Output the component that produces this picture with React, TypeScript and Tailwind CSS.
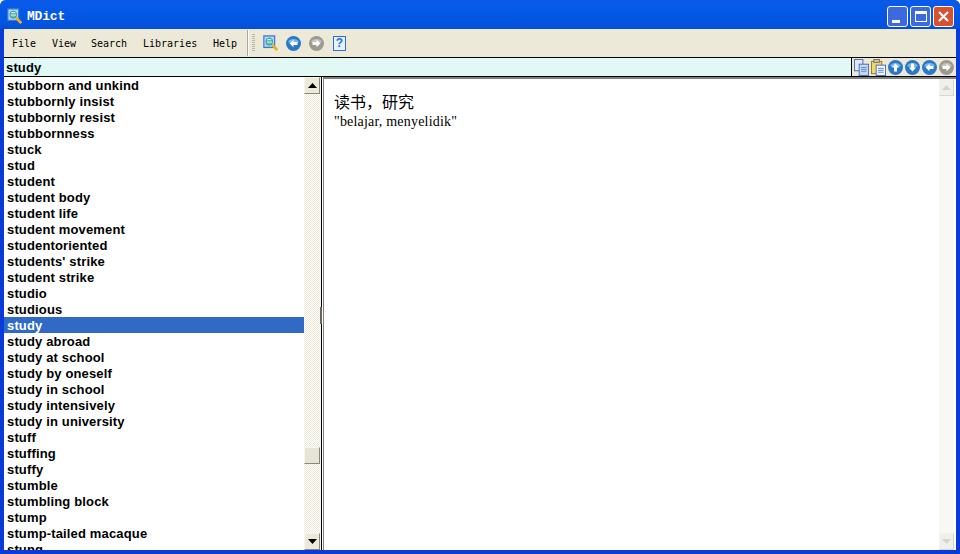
const words = [
  "stubborn and unkind",
  "stubbornly insist",
  "stubbornly resist",
  "stubbornness",
  "stuck",
  "stud",
  "student",
  "student body",
  "student life",
  "student movement",
  "studentoriented",
  "students' strike",
  "student strike",
  "studio",
  "studious",
  "study",
  "study abroad",
  "study at school",
  "study by oneself",
  "study in school",
  "study intensively",
  "study in university",
  "stuff",
  "stuffing",
  "stuffy",
  "stumble",
  "stumbling block",
  "stump",
  "stump-tailed macaque",
  "stung",
]

function RoundArrow({ dir, gray }: { dir: "left" | "right" | "up" | "down"; gray?: boolean }) {
  const rot = { left: 0, right: 180, up: 90, down: 270 }[dir]
  return (
    <svg width="15" height="15" viewBox="0 0 15 15" className="shrink-0">
      <circle cx="7.5" cy="7.5" r="7.5" fill={gray ? "#9a9a90" : "#2a78c8"} />
      <path d="M2 6 A6 5 0 0 1 13 6 A8 5 0 0 1 2 6" fill={gray ? "#c4c4bc" : "#7db8ea"} />
      <g transform={`rotate(${rot} 7.5 7.5)`}>
        <path d="M3.5 7.5 L7.5 3.8 V6 H11.5 V9 H7.5 V11.2 Z" fill="#fff" />
      </g>
    </svg>
  )
}

function AppIcon() {
  return (
    <svg width="15" height="16" viewBox="0 0 18 18" preserveAspectRatio="none" className="shrink-0">
      <rect x="1" y="1" width="13" height="13" fill="#a8d8f4" stroke="#3f78c8" strokeWidth="1.4" />
      <circle cx="7.5" cy="7.5" r="4" fill="#62c49a" stroke="#2f86c4" />
      <path d="M5 5 H10 M4.5 8 H11" stroke="#e6f6ff" />
      <path d="M11 11 L17 17" stroke="#e8b020" strokeWidth="3" />
    </svg>
  )
}

function PageIcon({ paste }: { paste?: boolean }) {
  if (paste) {
    return (
      <svg width="15" height="17" viewBox="0 0 16 18" preserveAspectRatio="none" className="shrink-0">
        <rect x="0.5" y="2.5" width="11" height="13" fill="#f4d56c" stroke="#8f7a30" />
        <rect x="3" y="0.5" width="6" height="3" fill="#c8c8c0" stroke="#70705c" />
        <rect x="5.5" y="6.5" width="10" height="11" fill="#eef4fc" stroke="#4a6cb0" />
        <path d="M7.5 10 H13.5 M7.5 12 H13.5 M7.5 14 H13.5" stroke="#5f86c8" />
      </svg>
    )
  }
  return (
    <svg width="15" height="17" viewBox="0 0 16 18" preserveAspectRatio="none" className="shrink-0">
      <rect x="0.5" y="0.5" width="9" height="12" fill="#dce8f8" stroke="#4a6cb0" />
      <rect x="5.5" y="5.5" width="10" height="12" fill="#c4d8f2" stroke="#4a6cb0" />
      <path d="M7.5 9 H13.5 M7.5 11 H13.5 M7.5 13 H13.5" stroke="#5f86c8" />
    </svg>
  )
}

function ScrollBtn({ up, disabled }: { up?: boolean; disabled?: boolean }) {
  return (
    <div
      className={`flex h-[17px] w-full shrink-0 items-center justify-center border ${
        disabled
          ? "border-t-[#f4f4ee] border-l-[#f4f4ee] border-r-[#d8d8d0] border-b-[#d8d8d0] bg-[#f0f0ea]"
          : "border-t-[#f6f5ee] border-l-[#f6f5ee] border-r-[#8a8878] border-b-[#8a8878] bg-[#ece9d8]"
      }`}
    >
      <svg width="9" height="5" viewBox="0 0 9 5">
        <path d={up ? "M4.5 0 L9 5 H0 Z" : "M0 0 H9 L4.5 5 Z"} fill={disabled ? "#d4d4cc" : "#000"} />
      </svg>
    </div>
  )
}

export default function App() {
  return (
    <div className="flex h-[554px] w-[960px] flex-col overflow-hidden rounded-t-md bg-[#0a3ad8] px-[4px] pb-[4px]">
      {/* Title bar */}
      <div className="-mx-[4px] flex h-[29px] shrink-0 items-center bg-gradient-to-b from-[#0a5ae8] via-[#0458e6] to-[#0350d8] pl-[7px] pr-[6px] pt-[3px]">
        <AppIcon />
        <span className="ml-[5px] pt-[2px] font-['Liberation_Mono',monospace] text-[13px] font-bold tracking-[-0.2px] text-white">MDict</span>
        <div className="ml-auto flex gap-[2px]">
          <div className="flex h-[21px] w-[21px] items-end rounded-[3px] border border-white bg-[#3c68e0] pb-[3px] pl-[4px]">
            <div className="h-[3px] w-[8px] bg-white" />
          </div>
          <div className="flex h-[21px] w-[21px] items-center justify-center rounded-[3px] border border-white bg-[#3c68e0]">
            <div className="h-[11px] w-[12px] border border-t-[3px] border-white" />
          </div>
          <div className="flex h-[21px] w-[21px] items-center justify-center rounded-[3px] border border-white bg-[#d8502c]">
            <svg width="13" height="13" viewBox="0 0 13 13">
              <path d="M2 2 L11 11 M11 2 L2 11" stroke="#fff" strokeWidth="2.2" />
            </svg>
          </div>
        </div>
      </div>

      {/* Menu and toolbar */}
      <div className="flex h-[28px] shrink-0 items-center bg-[#ece9d8] font-['DejaVu_Sans_Mono',monospace] text-[10px] text-black">
        <div className="flex pl-[4px]">
          <span className="w-[40px] pl-[4px]">File</span>
          <span className="w-[39px] pl-[4px]">View</span>
          <span className="w-[52px] pl-[4px]">Search</span>
          <span className="w-[70px] pl-[4px]">Libraries</span>
          <span className="w-[36px] pl-[4px]">Help</span>
        </div>
        <div className="ml-[2px] h-[26px] w-[2px] border-l border-[#aca899] bg-white" />
        <div className="ml-[3px] h-[18px] w-[3px] bg-[repeating-linear-gradient(#b8b5a4_0_1px,#ece9d8_1px_2px)]" />
        <div className="ml-[8px] flex items-center gap-[8px]">
          <AppIcon />
          <RoundArrow dir="left" />
          <RoundArrow dir="right" gray />
          <div className="ml-[1px] flex h-[15px] w-[13px] items-center justify-center border border-[#2a6ee0] bg-[#e8f2ff] font-['Liberation_Sans',sans-serif] text-[12px] font-bold text-[#2a6ee0]">?</div>
        </div>
      </div>

      {/* Search box */}
      <div className="flex h-[20px] shrink-0 items-stretch border-y border-black bg-[#e2f8f4]">
        <div className="flex flex-1 items-center pl-[2px] pt-[2px] font-['Liberation_Sans',sans-serif] text-[13px] leading-[16px] font-bold tracking-[0.15px] text-black">study</div>
        <div className="flex w-[105px] items-center gap-[2px] border-l border-black bg-[#ece9d8] pl-[2px]">
          <PageIcon />
          <PageIcon paste />
          <RoundArrow dir="up" />
          <RoundArrow dir="down" />
          <RoundArrow dir="left" />
          <RoundArrow dir="right" gray />
        </div>
      </div>

      <div className="flex min-h-0 flex-1">
        {/* Word list */}
        <div className="w-[300px] shrink-0 overflow-hidden bg-white font-['Liberation_Sans',sans-serif] text-[13px] font-bold tracking-[0.15px] text-black">
          {words.map((w) => (
            <div
              key={w}
              className={`h-[16px] pl-[3px] leading-[18px] ${w === "study" ? "bg-[#316ac5] text-white" : ""}`}
            >
              {w}
            </div>
          ))}
        </div>

        {/* List scrollbar */}
        <div className="flex w-[16px] shrink-0 flex-col bg-[repeating-conic-gradient(#ece9d8_0_25%,#ffffff_0_50%)] bg-[length:2px_2px]">
          <ScrollBtn up />
          <div className="h-[353px]" />
          <div className="h-[17px] w-[16px] border border-t-[#f6f5ee] border-l-[#f6f5ee] border-r-[#8a8878] border-b-[#8a8878] bg-[#e6e4d2]" />
          <div className="flex-1" />
          <ScrollBtn />
        </div>

        {/* Splitter */}
        <div className="flex w-[3px] shrink-0">
          <div className="w-[1px] bg-[repeating-conic-gradient(#ece9d8_0_25%,#ffffff_0_50%)] bg-[length:2px_2px]">
            <div className="mt-[230px] h-[17px] bg-[#6a6458]" />
          </div>
          <div className="w-[1px] bg-black">
            <div className="mt-[230px] h-[17px] bg-[#6a6458]" />
          </div>
          <div className="w-[1px] bg-white" />
        </div>

        {/* Definition pane */}
        <div className="flex min-w-0 flex-1 border-t-2 border-l border-[#808080] bg-white">
          <div className="min-w-0 flex-1 pl-[10px] pt-[12px] text-black">
            <p className="font-['Noto_Sans_CJK_SC',sans-serif] text-[16px] leading-[20px]">读书，研究</p>
            <p className="mt-[1px] font-['Liberation_Serif',serif] text-[14px] leading-[20px] tracking-[0.2px]">"belajar, menyelidik"</p>
          </div>
          <div className="flex w-[15px] shrink-0 flex-col justify-between bg-[#f8f8f4]">
            <ScrollBtn up disabled />
            <ScrollBtn disabled />
          </div>
          <div className="w-[2px] shrink-0 bg-white" />
        </div>
      </div>
    </div>
  )
}
